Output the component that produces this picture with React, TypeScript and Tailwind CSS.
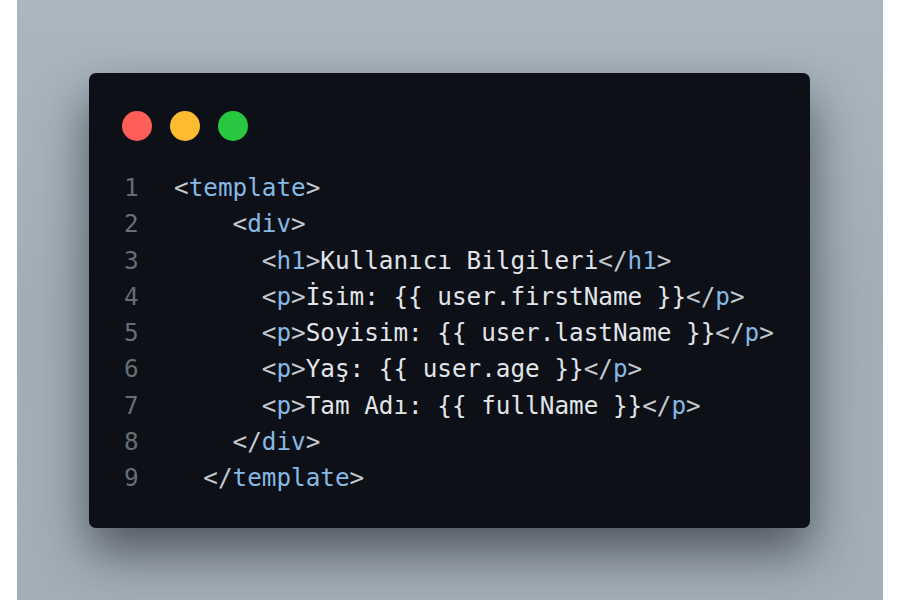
const lines: { indent: number; parts: [string, string][] }[] = [
  { indent: 0, parts: [["b", "<"], ["t", "template"], ["b", ">"]] },
  { indent: 4, parts: [["b", "<"], ["t", "div"], ["b", ">"]] },
  { indent: 6, parts: [["b", "<"], ["t", "h1"], ["b", ">"], ["x", "Kullanıcı Bilgileri"], ["b", "</"], ["t", "h1"], ["b", ">"]] },
  { indent: 6, parts: [["b", "<"], ["t", "p"], ["b", ">"], ["x", "İsim: {{ user.firstName }}"], ["b", "</"], ["t", "p"], ["b", ">"]] },
  { indent: 6, parts: [["b", "<"], ["t", "p"], ["b", ">"], ["x", "Soyisim: {{ user.lastName }}"], ["b", "</"], ["t", "p"], ["b", ">"]] },
  { indent: 6, parts: [["b", "<"], ["t", "p"], ["b", ">"], ["x", "Yaş: {{ user.age }}"], ["b", "</"], ["t", "p"], ["b", ">"]] },
  { indent: 6, parts: [["b", "<"], ["t", "p"], ["b", ">"], ["x", "Tam Adı: {{ fullName }}"], ["b", "</"], ["t", "p"], ["b", ">"]] },
  { indent: 4, parts: [["b", "</"], ["t", "div"], ["b", ">"]] },
  { indent: 2, parts: [["b", "</"], ["t", "template"], ["b", ">"]] },
];

const color: Record<string, string> = {
  b: "text-[#c3c9cf]",
  t: "text-[#86b8e4]",
  x: "text-[#e1e5ea]",
};

export default function App() {
  return (
    <div className="w-[900px] h-[600px] flex bg-white px-[17px]">
      <div className="flex-1 bg-linear-to-b from-[#acb6c0] via-[#a3adb7] to-[#a4aeb8] pt-[73px] pl-[72px]">
        {/* code card */}
        <div className="w-[721px] h-[455px] bg-[#0d1016] rounded-[7px] shadow-[0_24px_50px_rgba(20,26,34,0.6)] pt-[38px] pl-[33px] flex flex-col">
          <div className="flex gap-[18px]">
            <span className="w-[30px] h-[30px] rounded-full bg-[#fd5f58]" />
            <span className="w-[30px] h-[30px] rounded-full bg-[#fdbc2f]" />
            <span className="w-[30px] h-[30px] rounded-full bg-[#27c840]" />
          </div>
          <div className="mt-[29px] pl-[2px] font-['DejaVu_Sans_Mono',monospace] text-[24.3px] leading-[36.25px]">
            {lines.map((line, i) => (
              <div className="flex whitespace-pre" key={i}>
                <span className="w-[50px] text-[#676d75]">{i + 1}</span>
                <span>
                  {" ".repeat(line.indent)}
                  {line.parts.map(([k, s], j) => (
                    <span className={color[k]} key={j}>{s}</span>
                  ))}
                </span>
              </div>
            ))}
          </div>
        </div>
      </div>
    </div>
  );
}
